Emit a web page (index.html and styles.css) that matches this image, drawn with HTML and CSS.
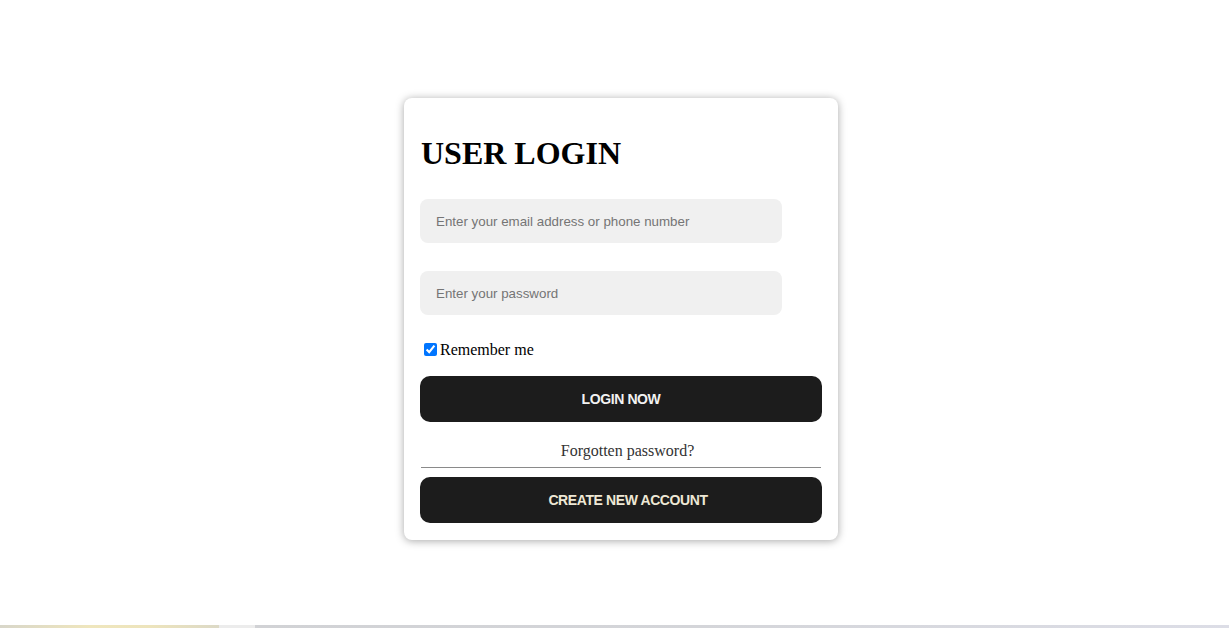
FILE: index.html
```html
<!DOCTYPE html>
<html lang="en">
<head>
<meta charset="utf-8">
<title>User Login</title>
<link rel="stylesheet" href="styles.css">
</head>
<body>
<main class="page">
  <form class="card">
    <h1 class="title">USER LOGIN</h1>
    <input class="field field-email" type="text" placeholder="Enter your email address or phone number">
    <input class="field field-pass" type="password" placeholder="Enter your password">
    <label class="remember"><input class="check" type="checkbox" checked>Remember me</label>
    <button class="btn btn-login" type="button">LOGIN NOW</button>
    <a class="forgot">Forgotten password?</a>
    <hr class="divider">
    <button class="btn btn-create" type="button">CREATE NEW ACCOUNT</button>
  </form>
</main>
<div class="strip"></div>
</body>
</html>
```
FILE: styles.css
```css
html, body {
  margin: 0;
  padding: 0;
  background: #fff;
}
body {
  height: 628px;
  overflow: hidden;
  display: flex;
  flex-direction: column;
  font-family: "Liberation Serif", "Times New Roman", serif;
}
.page {
  flex: 1;
  display: flex;
  justify-content: center;
  align-items: flex-start;
  padding-top: 98px;
  padding-left: 13px;
}
.card {
  width: 402px;
  padding: 16px 16px 17px 16px;
  background: #fff;
  border-radius: 8px;
  box-shadow: 0 1px 8px rgba(0, 0, 0, 0.35);
  display: flex;
  flex-direction: column;
  align-items: flex-start;
}
.title {
  font-family: "Liberation Serif", "Times New Roman", serif;
  font-size: 32px;
  font-weight: bold;
  margin: 21px 0 0 1px;
  line-height: 36px;
  color: #000;
}
.field {
  box-sizing: border-box;
  width: 362px;
  height: 44px;
  border: none;
  border-radius: 8px;
  background: #f0f0f0;
  padding: 0 16px;
  font-family: "Liberation Sans", Arial, sans-serif;
  font-size: 13.33px;
  color: #333;
  outline: none;
}
.field::placeholder {
  color: #757575;
}
.field-email {
  margin-top: 28px;
}
.field-pass {
  margin-top: 28px;
}
.remember {
  display: flex;
  align-items: center;
  margin-top: 25px;
  font-size: 16px;
  line-height: 19px;
  color: #000;
}
.check {
  width: 13px;
  height: 13px;
  margin: 0 3px 0 4px;
  accent-color: #0075ff;
}
.btn {
  box-sizing: border-box;
  width: 402px;
  height: 46px;
  border: none;
  border-radius: 10px;
  background: #1c1c1c;
  font-family: "Liberation Sans", Arial, sans-serif;
  font-size: 14px;
  font-weight: bold;
  letter-spacing: -0.4px;
  cursor: pointer;
}
.btn-login {
  margin-top: 17px;
  color: #f2f2f2;
}
.forgot {
  box-sizing: border-box;
  align-self: stretch;
  text-align: center;
  margin-top: 20px;
  padding-left: 13px;
  font-size: 16px;
  line-height: 18px;
  color: #333;
}
.divider {
  align-self: stretch;
  margin: 7px 1px 0 1px;
  border: none;
  border-top: 1px solid #8a8a8a;
  height: 0;
}
.btn-create {
  margin-top: 9px;
  padding-left: 20px;
  color: #eee8d5;
}
.strip {
  height: 3px;
  flex: none;
  background:
    linear-gradient(to right,
      #d8d6c9 0px, #efe6bd 90px, #ede4bc 150px, #dcd9c6 219px,
      #ececec 219px, #ececec 255px,
      #d1d2d5 255px, #d4d5d9 700px, #dcdde6 1229px);
}
```
